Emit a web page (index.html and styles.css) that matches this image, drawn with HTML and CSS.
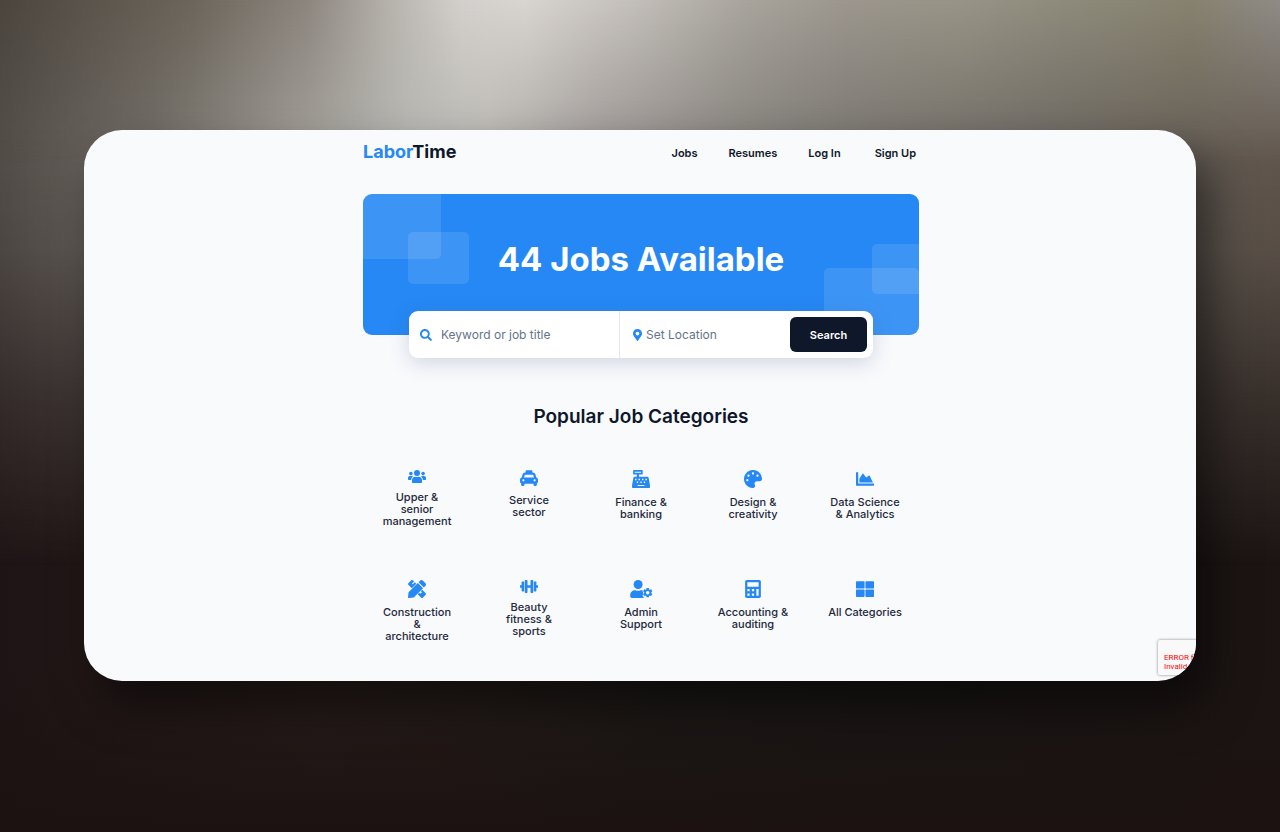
FILE: index.html
```html
<!DOCTYPE html>
<html lang="en">
<head>
<meta charset="utf-8">
<title>LaborTime</title>
<link rel="stylesheet" href="styles.css">
</head>
<body>
<div class="window">
  <div class="page">
    <header class="header">
      <a class="logo" href="#"><span class="logo-accent">Labor</span>Time</a>
      <nav class="nav">
        <a href="#">Jobs</a>
        <a href="#">Resumes</a>
        <a href="#">Log In</a>
        <a class="signup" href="#">Sign Up</a>
      </nav>
    </header>
    <main>
      <section class="hero">
        <span class="tile tile-a"></span><span class="tile tile-b"></span><span class="tile tile-c"></span><span class="tile tile-d"></span>
        <h1>44 Jobs Available</h1>
      </section>
      <form class="search">
        <label class="field keyword">
          <svg class="glass" viewBox="0 0 512 512" aria-hidden="true"><path d="M505 442.7L405.3 343c-4.5-4.5-10.6-7-17-7H372c27.6-35.3 44-79.7 44-128C416 93.1 322.9 0 208 0S0 93.1 0 208s93.1 208 208 208c48.3 0 92.7-16.4 128-44v16.3c0 6.4 2.5 12.5 7 17l99.7 99.7c9.4 9.4 24.6 9.4 33.9 0l28.3-28.3c9.4-9.4 9.4-24.6.1-34zM208 336c-70.7 0-128-57.2-128-128 0-70.7 57.2-128 128-128 70.7 0 128 57.2 128 128 0 70.7-57.2 128-128 128z"/></svg>
          <input type="text" placeholder="Keyword or job title" aria-label="Keyword or job title">
        </label>
        <label class="field place">
          <svg class="pin" viewBox="0 0 384 512" aria-hidden="true"><path d="M172.268 501.67C26.97 291.031 0 269.413 0 192 0 85.961 85.961 0 192 0s192 85.961 192 192c0 77.413-26.97 99.031-172.268 309.67-9.535 13.774-29.93 13.773-39.464 0zM192 272c44.183 0 80-35.817 80-80s-35.817-80-80-80-80 35.817-80 80 35.817 80 80 80z"/></svg>
          <input type="text" placeholder="Set Location" aria-label="Set Location">
        </label>
        <button type="submit">Search</button>
      </form>
      <h2>Popular Job Categories</h2>
      <div class="categories">
        <a class="category" href="#">
          <svg class="icon-low" viewBox="0 0 18 13" aria-hidden="true"><circle cx="9" cy="3" r="3"/><circle cx="2.9" cy="3.6" r="1.8"/><circle cx="15.1" cy="3.6" r="1.8"/><path d="M4 12.2v-2c0-2 1.4-3.4 3.3-3.4 1.2.4 2.2.4 3.4 0 1.900 0 3.300 1.400 3.300 3.400v2c0 .5-.3.8-.8.8H4.800c-.5 0-.8-.3-.8-.8zM0 9.200V8c0-1.200.8-2 1.900-2h1.900c.5 0 .9.200 1.200.400C3.900 7.100 3.200 8.200 3.100 9.900H.7c-.4 0-.7-.3-.7-.7zM18 9.200V8c0-1.200-.8-2-1.900-2h-1.900c-.5 0-.9.200-1.200.400 1.100.7 1.800 1.800 1.900 3.500h2.400c.4 0 .7-.3.7-.7z"/></svg>
          <span>Upper &amp;<br>senior<br>management</span>
        </a>
        <a class="category" href="#">
          <svg class="icon-mid" viewBox="0 32 512 448" aria-hidden="true"><path fill-rule="evenodd" d="M462 241.640l-22-84.840c-9.600-35.200-41.600-60.800-76.800-60.800H352V64c0-17.670-14.330-32-32-32H192c-17.670 0-32 14.330-32 32v32h-11.200c-35.200 0-67.200 25.600-76.800 60.800l-22 84.840C21.410 248.040 0 273.470 0 304v48c0 23.630 12.950 44.040 32 55.120V448c0 17.670 14.330 32 32 32h32c17.670 0 32-14.330 32-32v-32h256v32c0 17.670 14.330 32 32 32h32c17.670 0 32-14.330 32-32v-40.880c19.050-11.090 32-31.500 32-55.120v-48c0-30.530-21.410-55.960-50-62.360zM96 352c-17.670 0-32-14.330-32-32s14.330-32 32-32 32 14.330 32 32-14.330 32-32 32zm20.550-112l17.200-66.360c2.230-8.160 9.590-13.640 15.060-13.640h214.400c5.470 0 12.830 5.480 14.850 12.860L395.480 240H116.550zM416 352c-17.670 0-32-14.330-32-32s14.330-32 32-32 32 14.330 32 32-14.330 32-32 32z"/></svg>
          <span>Service<br>sector</span>
        </a>
        <a class="category" href="#">
          <svg viewBox="0 0 512 512" aria-hidden="true"><path fill-rule="evenodd" d="M48 0h240c9 0 16 7 16 16v96c0 9-7 16-16 16h-88v64h240c16 0 29 11 32 27l39 213c1 6 1 12 1 18v30c0 18-14 32-32 32H32c-18 0-32-14-32-32v-30c0-6 0-12 1-18l39-213c3-16 16-27 32-27h64v-64H48c-9 0-16-7-16-16V16C32 7 39 0 48 0zm32 48v32h176V48zM88 248v40h40v-40zm98 0v40h40v-40zm100 0v40h40v-40zm98 0v40h40v-40zM136 328v40h40v-40zm100 0v40h40v-40zm100 0v40h40v-40zM160 424v32h192v-32z"/></svg>
          <span>Finance &amp;<br>banking</span>
        </a>
        <a class="category" href="#">
          <svg viewBox="0 0 512 512" aria-hidden="true"><path d="M204.300 5C104.900 24.400 24.800 104.300 5.200 203.400c-37 187 131.700 326.400 258.800 306.700 41.200-6.400 61.400-54.600 42.500-91.700-23.100-45.400 9.900-98.400 60.900-98.400h79.700c35.800 0 64.800-29.600 64.900-65.300C511.500 97.100 368.100-26.900 204.300 5zM96 320c-17.700 0-32-14.300-32-32s14.300-32 32-32 32 14.300 32 32-14.300 32-32 32zm32-128c-17.700 0-32-14.300-32-32s14.300-32 32-32 32 14.300 32 32-14.300 32-32 32zm128-64c-17.700 0-32-14.300-32-32s14.300-32 32-32 32 14.300 32 32-14.300 32-32 32zm128 64c-17.700 0-32-14.300-32-32s14.300-32 32-32 32 14.300 32 32-14.300 32-32 32z"/></svg>
          <span>Design &amp;<br>creativity</span>
        </a>
        <a class="category" href="#">
          <svg viewBox="0 0 512 512" aria-hidden="true"><path d="M500 384c6.600 0 12 5.400 12 12v40c0 6.600-5.400 12-12 12H12c-6.600 0-12-5.400-12-12V76c0-6.600 5.400-12 12-12h40c6.600 0 12 5.400 12 12v308h436zM372.700 159.500L288 216l-85.300-113.700c-5.100-6.800-15.500-6.300-19.900 1L96 248v104h384l-89.900-187.800c-3.200-6.500-11.400-8.700-17.400-4.700z"/></svg>
          <span>Data Science<br>&amp; Analytics</span>
        </a>
        <a class="category" href="#">
          <svg viewBox="0 0 512 512" aria-hidden="true"><path d="M109 236L10 137c-13-13-13-33 0-46l81-81c13-13 33-13 46 0l34 34-50 50c-8 8-8 15 0 23s15 8 23 0l50-50 42 42zM403 276l99 99c13 13 13 33 0 46l-81 81c-13 13-33 13-46 0l-99-99 43-43 34 34 50-50c8-8 15-8 23 0s8 15 0 23l-50 50-9-9 53-53-60-36zM498 94l-80-80c-19-19-49-19-68 0l-48 48 148 148 48-48c19-19 19-49 0-68zM279 85L16 348 0 485c-2 15 11 29 27 27l137-16 263-263z"/></svg>
          <span>Construction<br>&amp;<br>architecture</span>
        </a>
        <a class="category" href="#">
          <svg class="icon-low" viewBox="0 0 18 13" aria-hidden="true"><rect x="4.800" width="2.700" height="13" rx=".7"/><rect x="10.500" width="2.700" height="13" rx=".7"/><rect x="1.600" y="1.600" width="2.600" height="9.800" rx=".7"/><rect x="13.800" y="1.600" width="2.600" height="9.800" rx=".7"/><path d="M7 5.300h4v2.400H7zM0 5.300h2v2.400H0zM16 5.300h2v2.400h-2z"/></svg>
          <span>Beauty<br>fitness &amp;<br>sports</span>
        </a>
        <a class="category" href="#">
          <svg class="icon-wide" viewBox="0 0 640 512" aria-hidden="true"><circle cx="224" cy="128" r="128"/><path d="M134 288h17c46 21 100 21 146 0h17c15 0 30 3 44 7-12 22-12 35 7 55-3 20-3 36 0 54-22 24-14 46 10 84 8 12 20 18 34 20-3 3-6 4-9 4H48c-27 0-48-22-48-48v-42c0-74 60-134 134-134z"/><path fill-rule="evenodd" d="M464 226h64l8 41 21 12 39-14 32 55-31 28v24l31 28-32 55-39-14-21 12-8 41h-64l-8-41-21-12-39 14-32-55 31-28v-24l-31-28 32-55 39 14 21-12zm32 84a50 50 0 1 0 .1 0z"/></svg>
          <span>Admin<br>Support</span>
        </a>
        <a class="category" href="#">
          <svg viewBox="0 0 448 512" aria-hidden="true"><path fill-rule="evenodd" d="M48 0h352c26 0 48 22 48 48v416c0 26-22 48-48 48H48c-26 0-48-22-48-48V48C0 22 22 0 48 0zm16 64v128h320V64zM64 256v64h64v-64zm128 0v64h64v-64zm128 0v192h64V256zM64 384v64h64v-64zm128 0v64h64v-64z"/></svg>
          <span>Accounting &amp;<br>auditing</span>
        </a>
        <a class="category" href="#">
          <svg viewBox="0 0 512 512" aria-hidden="true"><rect y="32" width="244" height="212" rx="20"/><rect x="268" y="32" width="244" height="212" rx="20"/><rect y="268" width="244" height="212" rx="20"/><rect x="268" y="268" width="244" height="212" rx="20"/></svg>
          <span>All Categories</span>
        </a>
      </div>
    </main>
  </div>
  <div class="captcha">ERROR for<br>Invalid site</div>
</div>
</body>
</html>
```
FILE: styles.css
```css
* { box-sizing: border-box; }
body {
  position: relative;
  z-index: 0;
  margin: 0;
  min-height: 100vh;
  padding: 130px 84px;
  font-family: Inter, "Liberation Sans", sans-serif;
  color: #0f172a;
  background:
    linear-gradient(transparent 80%, #1b1211),
    linear-gradient(90deg, #1f1415, #281d1b 25%, #241c19 38%, #1b1917 52%, #181615 72%, #1c1413);
}
/* Backdrop light: a middle band and a brighter one along the top edge */
body::before, body::after {
  content: "";
  position: absolute;
  inset: 0;
  z-index: -1;
}
body::before {
  background: linear-gradient(90deg, #544f4a, #75706a 12%, #a29f99 23%, #b6b7b2 32%, #b8b6b1 38%, #9a9592 47%, #898480 55%, #7c7974 62%, #73706a 70%, #6a6560 82%, #62584f);
  mask-image: linear-gradient(#000 15%, rgba(0,0,0,.85) 30%, rgba(0,0,0,.4) 48%, transparent 68%);
}
body::after {
  background: linear-gradient(90deg, #4b453e, #6b655b 15%, #8c857e 24%, #b3afa9 30%, #d3cfcb 36%, #d8d4d0 41%, #c4c0bb 49%, #a8a59d 58%, #9c968e 66%, #989486 75%, #8e8b7c 83%, #87826f 93%, #8f8b86);
  mask-image: linear-gradient(#000, transparent 20%);
}
a { color: inherit; text-decoration: none; }
.window {
  position: relative;
  overflow: hidden;
  padding-left: 2px;
  border-radius: 38px;
  background: #f8fafc;
  box-shadow: 15px 25px 45px rgba(0,0,0,.5);
}
.page { width: calc(50% + 1px); margin: 0 auto; padding-bottom: 39px; }
.header { display: flex; justify-content: space-between; align-items: center; height: 64px; padding: 0 3px 22px 0; }
.logo { font-size: 18px; font-weight: 700; }
.logo-accent { color: #2588f4; }
.nav { display: flex; gap: 31px; padding-top: 4px; font-size: 11px; font-weight: 600; }
.signup { margin-left: 3px; }
.hero {
  position: relative;
  overflow: hidden;
  height: 141px;
  padding-top: 45px;
  border-radius: 9px;
  background: #2588f4;
  color: #fff;
  text-align: center;
}
h1 { position: relative; margin: 0; font-size: 33px; line-height: 40px; font-weight: 700; }
.tile { position: absolute; border-radius: 5px; background: rgba(255,255,255,.11); }
.tile-a { left: -8px; top: -8px; width: 86px; height: 73px; }
.tile-b { left: 45px; top: 38px; width: 61px; height: 52px; }
.tile-c { right: 0; bottom: -8px; width: 95px; height: 75px; }
.tile-d { right: -8px; top: 50px; width: 55px; height: 50px; }
.search {
  position: relative;
  display: flex;
  margin: -24px 46px 0;
  height: 47px;
  border-radius: 9px;
  background: #fff;
  box-shadow: 0 5px 20px rgba(71,85,130,.22);
}
.field { display: flex; align-items: center; min-width: 0; }
.keyword { flex: 213; padding-left: 11px; gap: 9px; border-right: 1px solid #e2e8f0; }
.place { flex: 168; padding-left: 13px; gap: 4px; }
.field svg { flex: none; height: 12px; fill: #2588f4; }
.field input { flex: 1; min-width: 0; padding: 0; border: 0; outline: 0; background: none; font: 12px Inter, sans-serif; color: #0f172a; }
.field input::placeholder { color: #64748b; opacity: 1; }
.search button {
  flex: none;
  width: 77px;
  margin: 6px 6px 6px 0;
  padding: 0;
  border: 0;
  border-radius: 6px;
  background: #0f172a;
  color: #fff;
  font: 600 11px Inter, sans-serif;
}
h2 { margin: 47px 0 41px; font-size: 19px; line-height: 24px; font-weight: 600; text-align: center; }
.categories { display: grid; grid-template-columns: repeat(5, 1fr); row-gap: 53px; margin: 0 -2px; }
.category { display: flex; flex-direction: column; align-items: center; gap: 8px; font-size: 11px; line-height: 12px; font-weight: 500; text-align: center; white-space: nowrap; color: #1e293b; }
.category svg { width: 18px; height: 18px; fill: #2588f4; }
.category .icon-low { height: 13px; }
.category .icon-mid { height: 16px; }
.category .icon-wide { width: 23px; }
.captcha {
  position: absolute;
  left: calc(100% - 38px);
  bottom: 6px;
  height: 35px;
  padding: 13px 6px 0;
  border-radius: 2px;
  background: #f9f9f9;
  box-shadow: 0 0 3px #808080;
  color: #f00;
  font: 8px/9px Roboto, sans-serif;
  white-space: nowrap;
}
```
